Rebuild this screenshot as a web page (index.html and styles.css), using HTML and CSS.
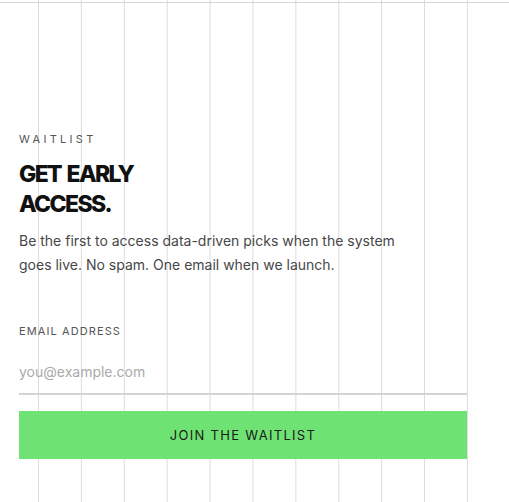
FILE: index.html
```html
<!DOCTYPE html>
<html lang="en">
<head>
<meta charset="utf-8">
<title>Waitlist</title>
<link rel="stylesheet" href="styles.css">
</head>
<body>
<main class="page">
  <section class="waitlist">
    <p class="eyebrow">WAITLIST</p>
    <h1 class="title">GET EARLY<br>ACCESS.</h1>
    <p class="lead">Be the first to access data-driven picks when the system goes live. No spam. One email when we launch.</p>
    <form class="form">
      <label class="label" for="email">EMAIL ADDRESS</label>
      <input class="input" id="email" type="email" placeholder="you@example.com">
      <button class="button" type="button">JOIN THE WAITLIST</button>
    </form>
  </section>
</main>
</body>
</html>
```

FILE: styles.css
```css
* { box-sizing: border-box; }

html, body {
  margin: 0;
  padding: 0;
  height: 100%;
}

body {
  background-color: #ffffff;
  background-image:
    linear-gradient(to bottom, transparent 2px, #d6d6d6 2px, #d6d6d6 3px, transparent 3px),
    linear-gradient(to right, #dcdcdc 1px, transparent 1px);
  background-size: 100% 100%, 42.9px 100%;
  background-position: 0 0, 38px 0;
  background-repeat: no-repeat, repeat-x;
  font-family: Inter, "Noto Sans", sans-serif;
  color: #1a1a1a;
}

.page {
  padding: 131px 42px 0 19px;
}

.waitlist {
  display: flex;
  flex-direction: column;
  width: 448px;
}

.eyebrow {
  margin: 0;
  font-size: 11px;
  line-height: 16px;
  letter-spacing: 0.3em;
  color: #555555;
}

.title {
  margin: 12px 0 0;
  font-size: 23px;
  line-height: 30px;
  font-weight: 800;
  letter-spacing: -0.07em;
  word-spacing: 2px;
  color: #111111;
}

.lead {
  margin: 10px 0 0;
  font-size: 14px;
  line-height: 24px;
  color: #474747;
  max-width: 390px;
}

.form {
  display: flex;
  flex-direction: column;
  margin-top: 46px;
}

.label {
  font-size: 11px;
  line-height: 16px;
  letter-spacing: 0.1em;
  color: #555555;
}

.input {
  margin-top: 12px;
  height: 44px;
  padding: 0 0 2px;
  border: 0;
  border-bottom: 2px solid #d4d4d4;
  background: transparent;
  font-family: inherit;
  font-size: 14px;
  color: #1a1a1a;
  outline: none;
}

.input::placeholder {
  color: #aaaaaa;
}

.button {
  margin-top: 16px;
  height: 48px;
  border: 0;
  background: #6ee373;
  font-family: inherit;
  font-size: 13px;
  letter-spacing: 0.1em;
  color: #1a1a1a;
  cursor: pointer;
}
```
